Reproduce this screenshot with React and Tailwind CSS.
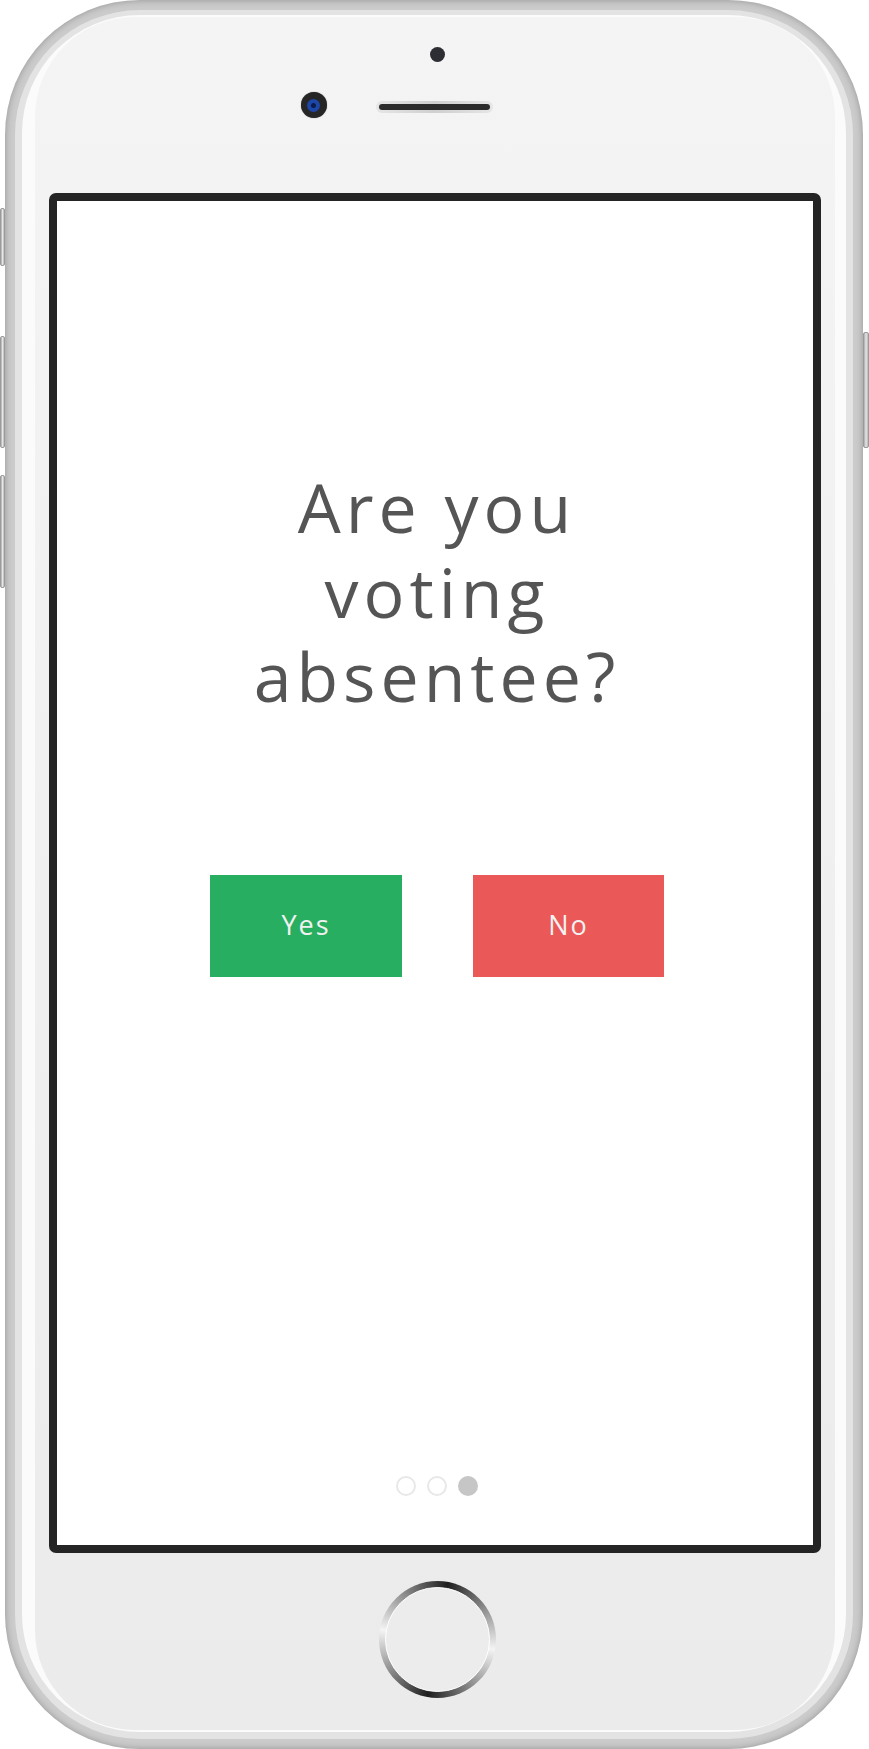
import React from "react";

function SideButton({ h, mt }) {
  return (
    <div
      className="w-full rounded-[2px] bg-gradient-to-r from-[#a9a9a9] via-[#e6e6e6] to-[#b8b8b8] border border-[#9a9a9a]"
      style={{ height: h, marginTop: mt }}
    />
  );
}

export default function App() {
  const font = { fontFamily: '"Open Sans", "Liberation Sans", sans-serif' };
  return (
    <div className="w-[869px] h-[1749px] bg-white flex flex-row" style={font}>
      {/* left side buttons */}
      <div className="w-[5px] flex flex-col">
        <SideButton h={58} mt={208} />
        <SideButton h={112} mt={70} />
        <SideButton h={113} mt={27} />
      </div>

      {/* body */}
      <div className="w-[858px] h-[1749px] rounded-[135px] bg-[#cbcbcb] shadow-[inset_0_0_7px_rgba(0,0,0,0.28)] pt-[10px] px-[10px] pb-[10px]">
        <div className="w-full h-full rounded-[125px] bg-[#e3e3e3] pt-[5px] px-[7px] pb-[7px]">
          <div className="w-full h-full rounded-[118px] bg-[#fbfbfb] pt-[2px] pl-[13px] pr-[11px] pb-[2px]">
            <div className="w-full h-full rounded-[100px] bg-gradient-to-b from-[#f4f4f4] to-[#eaebea] flex flex-col items-center">
              {/* top area */}
              <div className="h-[176px] w-full flex flex-col items-center pt-[30px]">
                <div className="ml-[4px] w-[15px] h-[15px] rounded-full bg-[#2c2e33]" />
                <div className="flex flex-row items-start mt-[30px] ml-[2px]">
                  <div className="w-[26px] h-[26px] rounded-full bg-[#262626] shadow-[0_0_1px_rgba(0,0,0,0.6)] flex items-center justify-center">
                    <div className="w-[13px] h-[13px] rounded-full bg-[#1c46a8] flex items-center justify-center">
                      <div className="w-[5px] h-[5px] rounded-full bg-[#0b1c4a]" />
                    </div>
                  </div>
                  <div className="w-[49px]" />
                  <div className="mt-[9px] w-[117px] h-[12px] rounded-full bg-gradient-to-r from-[#e6e6e6] via-[#cfcfcf] to-[#e6e6e6] p-[3px]">
                    <div className="w-full h-full rounded-full bg-[#2b2b2b]" />
                  </div>
                  <div className="w-[53px]" />
                  <div className="w-[26px]" />
                </div>
              </div>

              {/* screen */}
              <div className="w-[772px] h-[1360px] rounded-[7px] border-[8px] border-[#242424] bg-white flex flex-col items-center pt-[264px] pb-[49px] pl-[4px]">
                <h1 className="text-center text-[68px] leading-[84.5px] tracking-[5px] font-normal text-[#555555]">
                  Are you
                  <br />
                  voting
                  <br />
                  absentee?
                </h1>
                <div className="flex flex-row gap-[71px] mt-[156px]">
                  <button className="w-[192px] h-[102px] bg-[#28ae60] text-[#f1f1f1] text-[27px] tracking-[2px] flex items-center justify-center">
                    Yes
                  </button>
                  <button className="w-[191px] h-[102px] bg-[#eb5858] text-[#f1f1f1] text-[27px] tracking-[2px] flex items-center justify-center">
                    No
                  </button>
                </div>
                <div className="mt-auto flex flex-row gap-[11px]">
                  <div className="w-[20px] h-[20px] rounded-full border-2 border-[#e8e8e8]" />
                  <div className="w-[20px] h-[20px] rounded-full border-2 border-[#e8e8e8]" />
                  <div className="w-[20px] h-[20px] rounded-full bg-[#c6c6c6]" />
                </div>
              </div>

              {/* home button */}
              <div className="ml-[4px] mt-[28px] w-[117px] h-[117px] rounded-full p-[6px] bg-[conic-gradient(from_10deg,#1f1f1f,#f4f4f4_25%,#1f1f1f_50%,#f4f4f4_75%,#1f1f1f)]">
                <div className="w-full h-full rounded-full bg-[#ebeceb] border border-white" />
              </div>
            </div>
          </div>
        </div>
      </div>

      {/* right side button */}
      <div className="w-[6px] flex flex-col">
        <SideButton h={116} mt={332} />
      </div>
    </div>
  );
}
